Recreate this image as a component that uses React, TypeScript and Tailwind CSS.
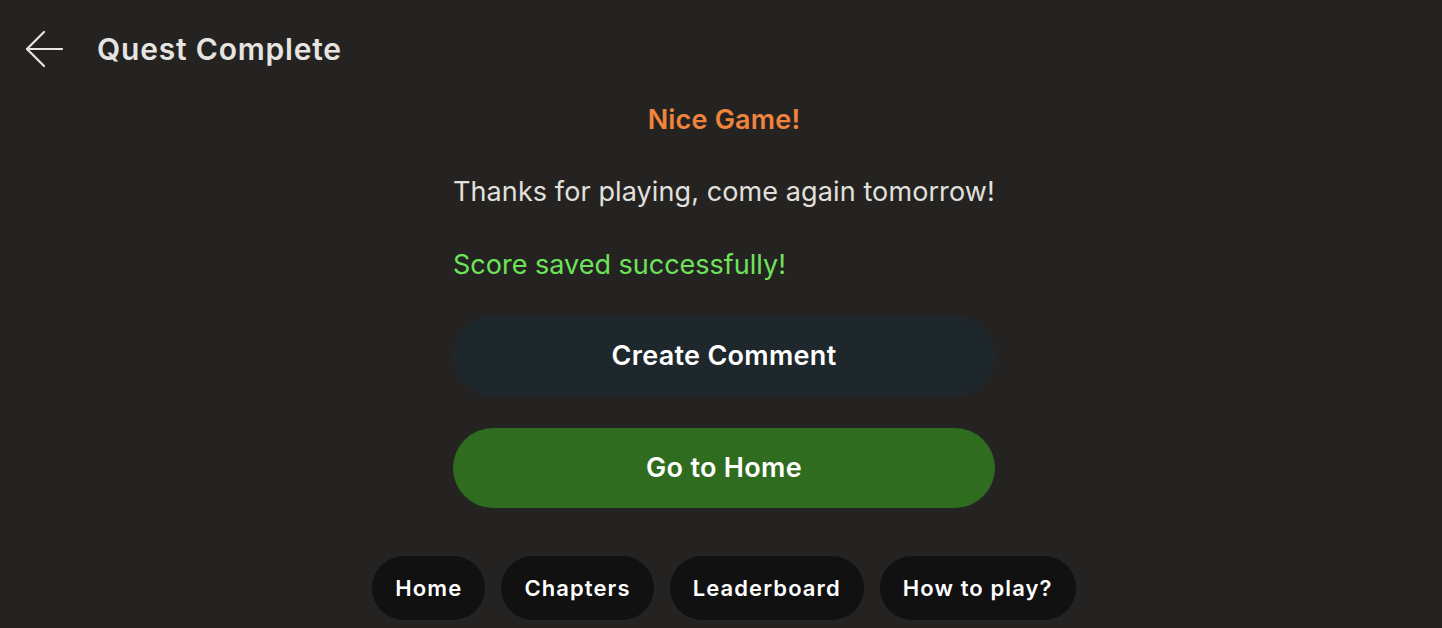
import React from 'react';

const BackArrow: React.FC = () => (
  <svg width="40" height="40" viewBox="0 0 40 40" fill="none" stroke="#e8e6e3" strokeWidth="2.2" strokeLinecap="round" strokeLinejoin="round">
    <path d="M38 20H3" />
    <path d="M20 3L3 20l17 17" />
  </svg>
);

const NavPill: React.FC<{ label: string }> = ({ label }) => (
  <button className="h-16 px-[23px] rounded-full bg-[#111111] text-white text-[22px] tracking-[1.1px] font-semibold">
    {label}
  </button>
);

export default function App() {
  return (
    <div className="w-[1442px] h-[628px] overflow-hidden bg-[#242322] text-[#e6e4e1] font-['Inter',sans-serif]">
      <header className="flex items-center h-[40px] mt-[29px] pl-[24px]">
        <BackArrow />
        <h1 className="ml-[33px] text-[30px] tracking-[0.8px] font-semibold text-[#e6e4e1]">Quest Complete</h1>
      </header>

      <main className="w-[542px] ml-[453px] flex flex-col">
        <p className="mt-[35px] text-center text-[27px] leading-8 tracking-[0.2px] font-semibold text-[#f0843c]">Nice Game!</p>
        <p className="mt-[40px] text-[27px] leading-8 tracking-[0.1px] text-[#e2e0dd]">Thanks for playing, come again tomorrow!</p>
        <p className="mt-[41px] text-[27px] leading-8 text-[#6ee35a]">Score saved successfully!</p>
        <button className="mt-[35px] h-20 rounded-full bg-[#1e282c] text-white text-[27px] tracking-[0.3px] font-semibold">
          Create Comment
        </button>
        <button className="mt-[32px] h-20 rounded-full bg-[#306c20] text-white text-[27px] tracking-[0.3px] font-semibold">
          Go to Home
        </button>
      </main>

      <nav className="mt-[48px] flex justify-center gap-4 pl-[6px]">
        {['Home', 'Chapters', 'Leaderboard', 'How to play?'].map((l) => (
          <NavPill key={l} label={l} />
        ))}
      </nav>
    </div>
  );
}
